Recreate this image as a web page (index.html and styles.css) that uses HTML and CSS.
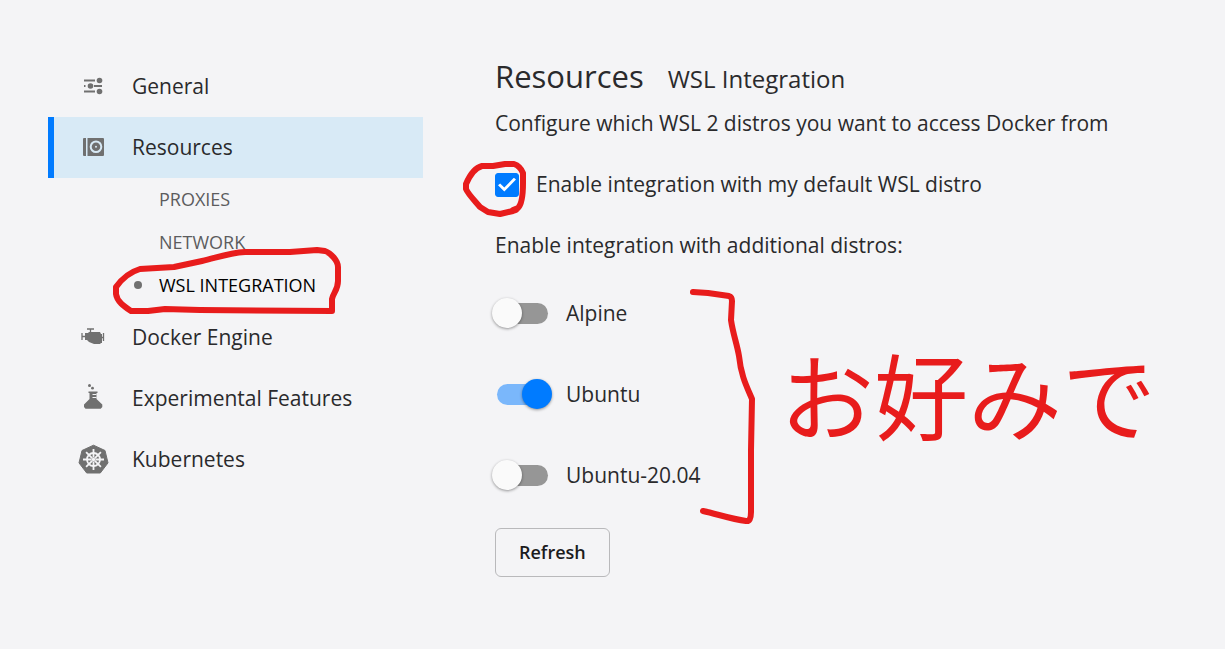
FILE: index.html
```html
<!DOCTYPE html>
<html lang="en">
<head>
<meta charset="utf-8">
<meta name="viewport" content="width=device-width, initial-scale=1">
<title>Resources - WSL Integration</title>
<link rel="stylesheet" href="styles.css">
</head>
<body>
<div class="layout">
  <nav class="nav" aria-label="Settings">
    <ul class="nav-list">
      <li><a class="nav-item" href="#general">
        <svg class="nav-icon" viewBox="0 0 32 32" aria-hidden="true"><g fill="none" stroke="currentColor" stroke-width="1.800"><path d="M7 10.500h11M7 16h1.500M17 16h8M7 21.500h11"/></g><circle cx="22.500" cy="10.500" r="2.800"/><circle cx="13.500" cy="16" r="2.800"/><circle cx="22.500" cy="21.500" r="2.800"/></svg>
        General</a></li>
      <li><a class="nav-item nav-item-active" href="#resources">
        <svg class="nav-icon" viewBox="0 0 32 32" aria-hidden="true"><path d="M7 7h2v18H7a1 1 0 0 1-1-1V8a1 1 0 0 1 1-1zM10.500 7H26a1 1 0 0 1 1 1v16a1 1 0 0 1-1 1H10.500z"/><circle class="cutout" cx="19" cy="15.800" r="5.300"/><circle class="pin" cx="19" cy="15.800" r="1"/></svg>
        Resources</a>
        <ul class="subnav">
          <li class="subnav-row"><a class="subnav-item" href="#proxies">PROXIES</a></li>
          <li class="subnav-row"><a class="subnav-item" href="#network">NETWORK</a></li>
          <li class="subnav-row"><a class="subnav-item subnav-item-active" href="#wsl" aria-current="page">WSL INTEGRATION</a>
            <svg class="ink ink-nav" viewBox="110 245 235 70" aria-hidden="true"><path d="M332 311V299C333 293 338 290 338 281V267C338 261 331 253 325 251L317 250L290 252H245C228 253 216 258 202 261L174 267L140 269C130 272 121 280 116 287V294C117 302 125 307 131 311H148L165 309L200 310L332 311"/></svg></li>
        </ul></li>
      <li><a class="nav-item" href="#engine">
        <svg class="nav-icon" viewBox="0 0 32 32" aria-hidden="true"><path d="M8 12h3l1-1h11l1 2h1v9h-1l-1 1h-6l-5-2-2-2H8z"/><path d="M5 12v7M5 15.500h3M10 8h7M13.500 8v3M26.500 12v8M24 16.500h2" fill="none" stroke="currentColor" stroke-width="1.300"/></svg>
        Docker Engine</a></li>
      <li><a class="nav-item" href="#experimental">
        <svg class="nav-icon" viewBox="0 0 32 32" aria-hidden="true"><path d="M11.500 9.500h9V11h-1v6l5.800 5.500V25l-1.600 1.800H8.500L7 25v-2.500L12.500 17v-6h-1z"/><path class="cutline" d="M15.500 12.500h4M15.500 15.500h4"/><circle cx="12.500" cy="3.500" r="1.500"/><circle cx="15.500" cy="6.200" r="1.400"/></svg>
        Experimental Features</a></li>
      <li><a class="nav-item" href="#kubernetes">
        <svg class="nav-icon" viewBox="0 0 32 32" aria-hidden="true"><path d="M16.500 2.200 28 7.500 31 19.900 23.300 30H9.700L2 19.900 5 7.500z" stroke="currentColor" stroke-linejoin="round"/><g class="wheel" transform="translate(.5 .5)"><circle cx="16" cy="16" r="6.500"/><path d="M16 5.500V14M16 18v8.500M5.500 16H14M18 16h8.500M8.600 8.600l6 6M17.400 17.400l6 6M23.400 8.600l-6 6M14.600 17.400l-6 6"/></g><circle class="hub" cx="16.500" cy="16.500" r="1.800"/></svg>
        Kubernetes</a></li>
    </ul>
  </nav>

  <main class="content">
    <header class="heading"><h1 class="title">Resources</h1><h2 class="subtitle">WSL Integration</h2></header>
    <p class="line">Configure which WSL 2 distros you want to access Docker from</p>
    <div class="line check-row">
      <input class="check" type="checkbox" id="default-distro" checked>
      <label for="default-distro">Enable integration with my default WSL distro</label>
      <svg class="ink ink-check" viewBox="460 155 70 65" aria-hidden="true"><path d="M513 210L518 208C523 203 523 190 523 183V173C521 168 517 165 514 164H505L493 166H482C474 168 469 177 466 184V189C468 194 475 201 480 207L488 212L500 214L513 211L516 210"/></svg>
    </div>
    <p class="line">Enable integration with additional distros:</p>
    <div class="distros">
      <div class="distro"><input class="switch" type="checkbox" role="switch" id="alpine"><label for="alpine">Alpine</label></div>
      <div class="distro"><input class="switch" type="checkbox" role="switch" id="ubuntu" checked><label for="ubuntu">Ubuntu</label></div>
      <div class="distro"><input class="switch" type="checkbox" role="switch" id="ubuntu-2004"><label for="ubuntu-2004">Ubuntu-20.04</label></div>
      <svg class="ink ink-bracket" viewBox="685 285 75 245" aria-hidden="true"><path d="M693 292L708 293L729 296Q732 297 732 301L731 320C733 334 737 344 739 356C741 376 747 387 752 399L751 450V512Q751 522 746 521C731 519 717 514 703 511"/></svg>
      <span class="note" lang="ja">お好みで</span>
    </div>
    <button class="refresh" type="button">Refresh</button>
  </main>
</div>
</body>
</html>
```

FILE: styles.css
```css
* {
  box-sizing: border-box;
}

body {
  margin: 0;
  background: #f4f4f6;
  color: #2a2a2c;
  font-family: "Open Sans", "Noto Sans", sans-serif;
  font-size: 21px;
  font-weight: 400;
}

.layout {
  display: grid;
  grid-template-columns: 375px 1fr;
  column-gap: 72px;
  padding: 56px 48px;
}

ul {
  margin: 0;
  padding: 0;
  list-style: none;
}

a {
  color: inherit;
  text-decoration: none;
}

.nav-item {
  display: flex;
  align-items: center;
  gap: 23px;
  height: 61px;
  padding: 0 0 2px 23px;
  border-left: 6px solid transparent;
}

.nav-item-active {
  border-left-color: #007bff;
  background: #d8eaf6;
}

.nav-icon {
  width: 32px;
  height: 32px;
  color: #707070;
  fill: currentColor;
}

.cutout {
  fill: none;
  stroke: #d8eaf6;
  stroke-width: 2;
}

.pin {
  fill: #d8eaf6;
}

.cutline {
  stroke: #f4f4f6;
}

.wheel {
  fill: none;
  stroke: #f4f4f6;
  stroke-width: 1.8;
}

.hub {
  fill: #f4f4f6;
}

.subnav-row {
  position: relative;
}

.subnav-item {
  display: flex;
  align-items: center;
  height: 43px;
  padding: 0 0 1px 111px;
  color: #5c5c5e;
  font-size: 18px;
}

.subnav-item-active {
  color: #000;
}

.subnav-item-active::before {
  content: "";
  width: 8px;
  height: 8px;
  margin-left: -25px;
  margin-right: 17px;
  border-radius: 50%;
  background: #707070;
}

.ink {
  position: absolute;
  fill: none;
  stroke: #e81c1c;
  stroke-width: 6;
  stroke-linecap: round;
  stroke-linejoin: round;
  pointer-events: none;
}

.ink-nav {
  left: 62px;
  top: -19px;
  width: 235px;
  height: 70px;
}

.ink-check {
  left: -35px;
  top: 1px;
  width: 70px;
  height: 65px;
}

.ink-bracket {
  left: 190px;
  top: -13px;
  width: 75px;
  height: 245px;
}

.heading {
  display: flex;
  align-items: baseline;
  gap: 24px;
  height: 37px;
  line-height: 40px;
}

.title,
.subtitle {
  margin: 0;
  font-weight: 400;
}

.title {
  font-size: 31px;
}

.subtitle {
  font-size: 24px;
}

.line {
  margin: 0;
  line-height: 61px;
}

.check-row {
  position: relative;
  display: flex;
  align-items: center;
  gap: 17px;
}

.check {
  display: grid;
  place-items: center;
  appearance: none;
  width: 24px;
  height: 24px;
  margin: 0;
  border: 1px solid #007bff;
  border-radius: 3px;
}

.check:checked {
  background: #007bff;
}

.check:checked::before {
  content: "";
  width: 18px;
  height: 14px;
  background: #fff;
  clip-path: polygon(0 55%, 12% 43%, 35% 72%, 88% 2%, 100% 14%, 35% 100%);
}

.distros {
  position: relative;
  display: grid;
  gap: 51px;
  margin-top: 22px;
}

.distro {
  display: flex;
  align-items: center;
  gap: 14px;
  height: 30px;
}

.switch {
  position: relative;
  appearance: none;
  width: 60px;
  height: 30px;
  margin: 0 0 0 -3px;
}

.switch::before {
  content: "";
  position: absolute;
  inset: 5px 4px 4px 5px;
  border-radius: 11px;
  background: #969696;
}

.switch::after {
  content: "";
  position: absolute;
  left: 0;
  top: 0;
  width: 30px;
  height: 30px;
  border-radius: 50%;
  background: #fafafa;
  box-shadow: 0 1px 3px rgba(0, 0, 0, 0.4);
}

.switch:checked::before {
  background: #7ab7fb;
}

.switch:checked::after {
  left: 30px;
  background: #007bff;
}

.note {
  position: absolute;
  left: 285px;
  top: 48px;
  color: #e81c1c;
  font-family: "Noto Sans CJK JP", sans-serif;
  font-size: 94px;
  font-weight: 400;
  line-height: 94px;
  white-space: nowrap;
}

.refresh {
  margin-top: 38px;
  padding: 0 23px 2px;
  height: 49px;
  border: 1px solid #b9b9bb;
  border-radius: 6px;
  background: transparent;
  color: #1c1c1e;
  font-family: inherit;
  font-size: 18px;
  font-weight: 600;
}
```
